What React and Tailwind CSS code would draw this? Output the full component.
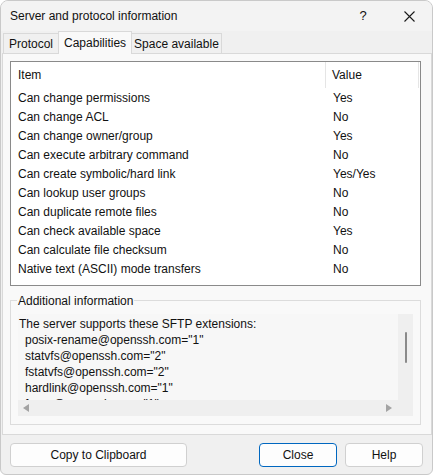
import React from 'react';

const rows = [
  ['Can change permissions', 'Yes'],
  ['Can change ACL', 'No'],
  ['Can change owner/group', 'Yes'],
  ['Can execute arbitrary command', 'No'],
  ['Can create symbolic/hard link', 'Yes/Yes'],
  ['Can lookup user groups', 'No'],
  ['Can duplicate remote files', 'No'],
  ['Can check available space', 'Yes'],
  ['Can calculate file checksum', 'No'],
  ['Native text (ASCII) mode transfers', 'No'],
];

const extensions = [
  'posix-rename@openssh.com="1"',
  'statvfs@openssh.com="2"',
  'fstatvfs@openssh.com="2"',
  'hardlink@openssh.com="1"',
  'fsync@openssh.com="1"',
];

const font = { fontFamily: '"Liberation Sans", Arial, sans-serif' };

const App = () => {
  return (
    <div className="w-[434px] h-[476px] bg-white text-[12px] text-[#111]" style={font}>
      <div className="w-[433px] h-[475px] bg-[#f0f0f0] border border-[#c9c9c9] rounded-t-[8px] rounded-b-[6px] flex flex-col overflow-hidden">
        {/* title bar */}
        <div className="h-[30px] flex items-center bg-[#f3f3f3]">
          <span className="pl-[9px] text-[12px] flex-1">Server and protocol information</span>
          <span className="w-[46px] text-center text-[13px] ml-[4px]">?</span>
          <span className="w-[46px] flex justify-center">
            <svg width="11" height="11" viewBox="0 0 11 11">
              <path d="M0.5 0.5 L10.5 10.5 M10.5 0.5 L0.5 10.5" stroke="#1a1a1a" strokeWidth="1.1" />
            </svg>
          </span>
        </div>

        {/* tabs */}
        <div className="h-[22px] flex items-end pl-[2px] relative z-10">
          <div className="h-[20px] px-[5px] flex items-center border border-b-0 border-[#d9d9d9] bg-[#f0f0f0]">Protocol</div>
          <div className="h-[23px] -mb-[1px] px-[5px] flex items-center border border-b-0 border-[#d9d9d9] bg-[#f9f9f9] -ml-[1px]">Capabilities</div>
          <div className="h-[20px] px-[2px] flex items-center border border-b-0 border-[#d9d9d9] bg-[#f0f0f0] -ml-[1px]">Space available</div>
        </div>

        {/* tab page */}
        <div className="ml-[1px] w-[430px] h-[382px] border border-[#d9d9d9] bg-[#f9f9f9] px-[7px] pt-[7px]">
          <div className="w-[411px] h-[225px] border border-[#8a8a8a] bg-white">
            <div className="h-[26px] flex items-center">
              <div className="w-[315px] pl-[7px] border-r border-[#e5e5e5] h-full flex items-center">Item</div>
              <div className="w-[93px] pl-[6px] border-r border-[#e5e5e5] h-full flex items-center">Value</div>
            </div>
            {rows.map((r, i) => (
              <div key={i} className="h-[19px] flex items-center">
                <div className="w-[316px] pl-[7px]">{r[0]}</div>
                <div className="pl-[6px]">{r[1]}</div>
              </div>
            ))}
          </div>

          {/* additional information */}
          <div className="relative mt-[14px] w-[411px] h-[125px] border border-[#dcdcdc] px-[7px] pt-[13px]">
            <span className="absolute -top-[9px] left-[6px] px-[1px] bg-[#f9f9f9]">Additional information</span>
            <div className="w-[395px] h-[102px] bg-[#f7f7f7] flex flex-col">
              <div className="flex flex-1 overflow-hidden">
                <div className="flex-1 pl-[1px] pt-[2px] leading-[16px] overflow-hidden whitespace-nowrap">
                  <div>The server supports these SFTP extensions:</div>
                  {extensions.map((e, i) => (
                    <div key={i} className="pl-[6px]">{e}</div>
                  ))}
                </div>
                <div className="w-[15px] bg-[#efefef] flex justify-center pt-[18px]">
                  <div className="w-[2px] h-[31px] bg-[#8a8a8a] rounded-full"></div>
                </div>
              </div>
              <div className="h-[16px] bg-[#efefef] flex items-center justify-between pl-[5px] pr-[21px]">
                <svg width="6" height="8" viewBox="0 0 6 8"><path d="M6 0 L0 4 L6 8 Z" fill="#a3a3a3" /></svg>
                <svg width="6" height="8" viewBox="0 0 6 8"><path d="M0 0 L6 4 L0 8 Z" fill="#a3a3a3" /></svg>
              </div>
            </div>
          </div>
        </div>

        {/* buttons */}
        <div className="flex items-center pt-[8px] pl-[9px] pr-[9px]">
          <button className="w-[177px] h-[24px] rounded-[4px] border border-[#d0d0d0] bg-[#fdfdfd]">Copy to Clipboard</button>
          <div className="flex-1"></div>
          <button className="w-[78px] h-[24px] rounded-[4px] border border-[#0067c0] bg-[#fdfdfd]">Close</button>
          <button className="ml-[8px] w-[78px] h-[24px] rounded-[4px] border border-[#d0d0d0] bg-[#fdfdfd]">Help</button>
        </div>
      </div>
    </div>
  );
};

export default App;
